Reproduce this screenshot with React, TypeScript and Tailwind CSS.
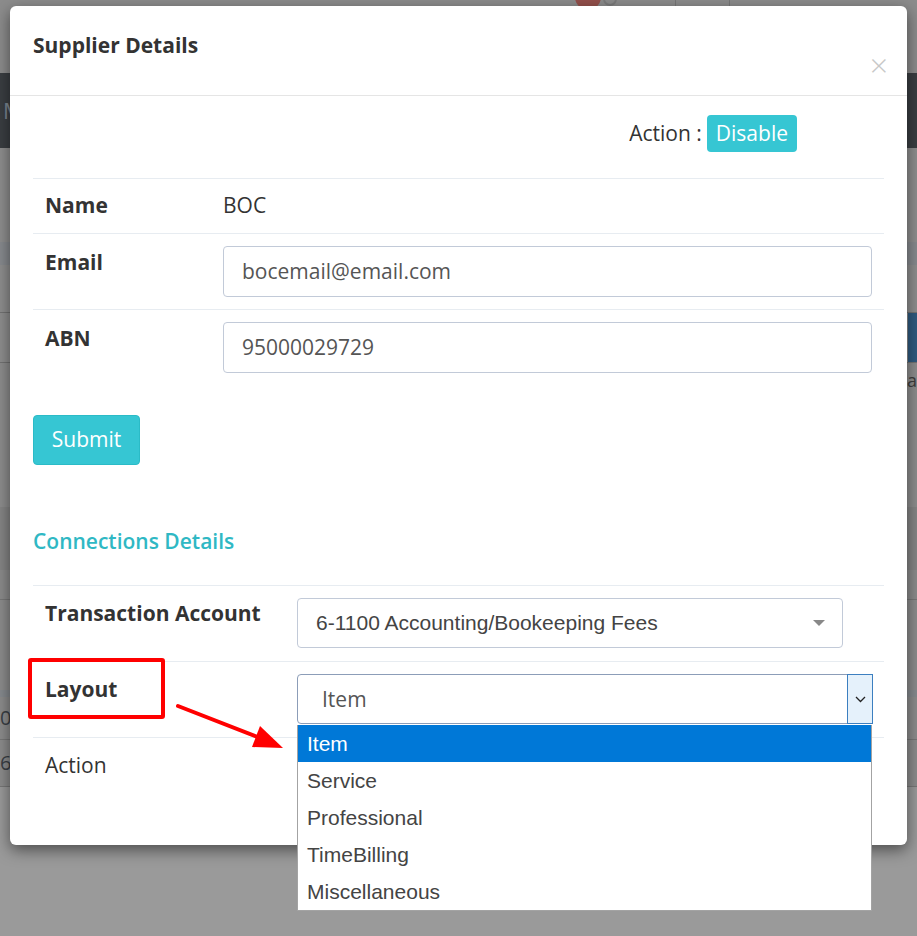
const sans = "font-['Open_Sans','Noto_Sans',sans-serif]";
const arial = "font-['Liberation_Sans',Arial,sans-serif]";

function Backdrop() {
  return (
    <div className={`flex flex-col ${sans}`}>
      <div className="h-[73px] bg-[#8c8c8c] flex items-start pl-[575px]">
        <div className="w-[26px] h-[26px] -mt-[16px] rounded-full bg-[#94504b]" />
        <div className="w-[14px] h-[14px] -mt-[8px] ml-[2px] rounded-full border-2 border-[#7b7b7b]" />
        <div className="w-px h-[30px] bg-[#777] ml-[58px]" />
        <div className="w-px h-[30px] bg-[#777] ml-[53px]" />
      </div>
      <div className="h-[75px] bg-[#3a3e42] flex items-center pl-[3px] text-[22px] text-[#7d8791]">M</div>
      <div className="h-[94px] bg-[#8e8e8e]" />
      <div className="h-[23px] bg-[#878a8e]" />
      <div className="h-[48px] bg-[#8e8e8e] border-b border-[#727272]" />
      <div className="h-[50px] flex border-b border-[#727272]">
        <div className="flex-1 bg-[#8e8e8e]" />
        <div className="w-[9px] bg-[#2f5a7f]" />
      </div>
      <div className="h-[144px] bg-[#8d8d8d] flex justify-end">
        <span className="text-[18px] leading-[34px] text-[#3d3d3d]">La</span>
      </div>
      <div className="h-[63px] bg-[#858585]" />
      <div className="h-[30px] bg-[#8b8b8b] border-b border-[#777]" />
      <div className="h-[90px] bg-[#8c8c8c]" />
      <div className="h-[7px] bg-[#868a8e]" />
      <div className="h-[43px] bg-[#8c8c8c] border-b border-[#777] flex items-center">
        <span className="text-[20px] text-[#3a3f45]">0</span>
      </div>
      <div className="h-[47px] bg-[#8c8c8c] border-b border-[#777] flex items-center">
        <span className="text-[20px] text-[#3a3f45]">6</span>
      </div>
      <div className="flex-1 bg-[#9a9a9a]" />
    </div>
  );
}

function Field({ value }: { value: string }) {
  return (
    <div className="h-[51px] mr-[12px] border border-[#c2cad8] rounded-[4px] flex items-center px-[18px] text-[21px] text-[#555]">
      {value}
    </div>
  );
}

export default function App() {
  return (
    <div className="relative w-[917px] h-[936px] overflow-hidden bg-[#9a9a9a]">
      <Backdrop />

      <div className={`absolute left-[10px] top-[6px] w-[897px] h-[839px] bg-white rounded-[6px] shadow-[0_5px_15px_rgba(0,0,0,0.5)] ${sans} text-[#333]`}>
        <div className="h-[90px] border-b border-[#e5e5e5] px-[23px] flex justify-between items-start">
          <h4 className="pt-[27px] text-[21px] leading-[24px] font-bold">Supplier Details</h4>
          <span className="mt-[45px] -mr-[4px] text-[32px] leading-[28px] text-[#c8c8c8] font-light">×</span>
        </div>

        <div className="px-[23px]">
          <div className="flex justify-end items-center pr-[87px] pt-[19px]">
            <span className="text-[21px] mr-[5px]">Action :</span>
            <span className="h-[37px] px-[9px] flex items-center rounded-[4px] bg-[#36c6d3] text-white text-[21px]">Disable</span>
          </div>

          <div className="mt-[26px]">
            <div className="grid grid-cols-[190px_1fr] h-[55px] border-t border-[#e7ecf1] items-center text-[21px]">
              <span className="pl-[12px] font-bold">Name</span>
              <span>BOC</span>
            </div>
            <div className="grid grid-cols-[190px_1fr] h-[76px] border-t border-[#e7ecf1] pt-[12px] text-[21px]">
              <span className="pl-[12px] font-bold leading-[28px] pt-[2px]">Email</span>
              <Field value="bocemail@email.com" />
            </div>
            <div className="grid grid-cols-[190px_1fr] h-[76px] border-t border-[#e7ecf1] pt-[12px] text-[21px]">
              <span className="pl-[12px] font-bold leading-[28px] pt-[2px]">ABN</span>
              <Field value="95000029729" />
            </div>
          </div>

          <button className="mt-[30px] h-[50px] w-[107px] rounded-[4px] border border-[#2bbbc7] bg-[#36c6d3] text-white text-[21px]">
            Submit
          </button>

          <h3 className="mt-[62px] text-[21px] leading-[28px] font-semibold text-[#2fb8c4]">Connections Details</h3>

          <div className="mt-[30px]">
            <div className="grid grid-cols-[264px_1fr] h-[76px] border-t border-[#e7ecf1] pt-[12px] text-[21px]">
              <span className="pl-[12px] font-bold leading-[28px] pt-[1px]">Transaction Account</span>
              <div className={`w-[546px] h-[50px] border border-[#c2cad8] rounded-[4px] flex items-center justify-between pl-[18px] pr-[17px] ${arial} text-[21px] text-[#444]`}>
                <span>6-1100 Accounting/Bookeeping Fees</span>
                <span className="w-0 h-0 border-l-[6px] border-r-[6px] border-t-[6px] border-l-transparent border-r-transparent border-t-[#888]" />
              </div>
            </div>
            <div className="grid grid-cols-[264px_1fr] h-[76px] border-t border-[#e7ecf1] pt-[12px] text-[21px]">
              <span className="pl-[12px] font-bold leading-[28px] pt-[1px]">Layout</span>
              <div className="w-[576px] h-[50px] border border-[#8c9db8] rounded-l-[4px] flex items-stretch text-[#555]">
                <span className="flex-1 flex items-center pl-[24px] pt-[2px] text-[21px]">Item</span>
                <span className="w-[26px] -my-px -mr-px border border-[#3c7fc0] bg-[#e5f1fb] flex items-center justify-center">
                  <svg width="11" height="7" viewBox="0 0 11 7">
                    <polyline points="1,1 5.5,5.5 10,1" fill="none" stroke="#222" strokeWidth="1.3" />
                  </svg>
                </span>
              </div>
            </div>
            <div className="h-[60px] border-t border-[#e7ecf1] pt-[13px] text-[21px] leading-[28px]">
              <span className="pl-[12px]">Action</span>
            </div>
          </div>
        </div>
      </div>

      <div className={`absolute left-[297px] top-[725px] w-[575px] bg-white border border-[#a3a3a3] border-t-0 ${arial} text-[21px] text-[#444]`}>
        {["Item", "Service", "Professional", "TimeBilling", "Miscellaneous"].map((o, i) => (
          <div key={o} className={`h-[37px] flex items-center pl-[9px] ${i === 0 ? "bg-[#0078d7] text-white" : ""}`}>
            {o}
          </div>
        ))}
      </div>

      <div className="absolute left-[28px] top-[658px] w-[137px] h-[61px] border-4 border-[#ff0000] rounded-[3px]" />

      <svg className="absolute left-[170px] top-[695px]" width="120" height="60" viewBox="0 0 120 60">
        <line x1="8" y1="11" x2="90" y2="43" stroke="#ff0000" strokeWidth="4" strokeLinecap="round" />
        <polygon points="113,53 90,31 82,52" fill="#ff0000" />
      </svg>
    </div>
  );
}
